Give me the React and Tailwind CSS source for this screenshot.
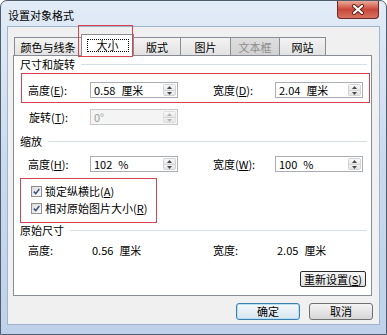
import React from 'react';

const Spin = ({ disabled }) => {
  const c = disabled ? '#b5b5b5' : '#4a4a4a';
  return (
    <div className={`flex flex-col w-[13px] my-px mr-px rounded-[2px] border ${disabled ? 'border-[#e0e0e0]' : 'border-[#cfd3d8]'}`}>
      <div className="flex-1 flex items-center justify-center bg-gradient-to-b from-[#f8f8f8] to-[#e8e8e8] border-b border-[#d5d5d5]">
        <svg width="5" height="3" viewBox="0 0 5 3"><path d="M0 3 L2.5 0 L5 3Z" fill={c} /></svg>
      </div>
      <div className="flex-1 flex items-center justify-center bg-gradient-to-b from-[#f3f3f3] to-[#e3e3e3]">
        <svg width="5" height="3" viewBox="0 0 5 3"><path d="M0 0 L2.5 3 L5 0Z" fill={c} /></svg>
      </div>
    </div>
  );
};

// number + unit, with the wider gap the dialog font gives
const Val = ({ n, u }) => (
  <span className="whitespace-nowrap">
    {n}
    <span className="ml-[6px]">{u}</span>
  </span>
);

const Field = ({ children, disabled }) => (
  <div
    className={`flex h-[16px] w-[88px] border ${
      disabled ? 'border-[#c8c8c8] bg-[#f4f4f4] text-[#9a9a9a]' : 'border-[#abadb3] bg-white text-black'
    }`}
  >
    <div className="flex-1 pl-[3px] leading-[14px] whitespace-nowrap">{children}</div>
    <Spin disabled={disabled} />
  </div>
);

const Label = ({ text, k }) => (
  <span className="whitespace-nowrap">
    {text}(<span className="underline">{k}</span>):
  </span>
);

const Heading = ({ text }) => (
  <div className="flex items-center h-[16px] pl-[6px] pr-[4px]">
    <span className="whitespace-nowrap">{text}</span>
    <div className="flex-1 ml-[6px] border-t border-[#d5dfe5]" />
  </div>
);

const Check = ({ children }) => (
  <div className="flex items-center h-[17px] pl-[17px]">
    <div className="w-[11px] h-[11px] border border-[#8e8f8f] bg-gradient-to-br from-[#dcdcdc] to-[#fbfbfb] p-px">
      <svg width="7" height="7" viewBox="0 0 7 7" className="block">
        <path d="M0.8 3.6 L2.8 5.6 L6.3 1" stroke="#3b4f86" strokeWidth="1.5" fill="none" />
      </svg>
    </div>
    <span className="ml-[3px] whitespace-nowrap">{children}</span>
  </div>
);

const Row = ({ children }) => (
  <div className="grid grid-cols-[62px_88px_35px_62px_88px] items-center pl-[14px] h-[16px]">{children}</div>
);

const tabs = [
  { t: '颜色与线条', w: 'w-[68px]' },
  { t: '大小', w: 'w-[53px]', sel: true },
  { t: '版式', w: 'w-[48px]' },
  { t: '图片', w: 'w-[51px]' },
  { t: '文本框', w: 'w-[50px]', dis: true },
  { t: '网站', w: 'w-[47px]' },
];

const App = () => {
  return (
    <div className="w-[387px] h-[335px] bg-white font-['Noto_Sans_CJK_SC','Noto_Sans',sans-serif] text-[11px] text-black">
      <div className="relative w-[387px] h-[335px] rounded-t-[7px] border border-[#4f5d6e] bg-gradient-to-b from-[#e2ecf7] via-[#c9daee] to-[#bfd2ea] px-[6px] flex flex-col">
        {/* title bar */}
        <div className="h-[25px] flex items-start justify-between">
          <span className="mt-[7px] ml-[1px] text-[11px] leading-[14px] text-black">设置对象格式</span>
          <div className="mr-[1px] w-[42px] h-[18px] rounded-b-[4px] border border-t-0 border-[#6e2a22] bg-gradient-to-b from-[#eba998] via-[#c8473a] to-[#d77260] flex items-center justify-center">
            <svg width="14" height="11" viewBox="0 0 14 11">
              <path d="M3 2 L11 9 M11 2 L3 9" stroke="#5a1d16" strokeWidth="4" strokeLinecap="round" />
              <path d="M3 2 L11 9 M11 2 L3 9" stroke="#ffffff" strokeWidth="2.2" strokeLinecap="round" />
            </svg>
          </div>
        </div>

        {/* client area */}
        <div className="w-[373px] h-[299px] border border-[#9fb4cf] bg-[#f0f0f0] flex flex-col">
          {/* tabs */}
          <div className="mt-[7px] h-[21px] pl-[6px] flex items-end">
            {tabs.map((tab, i) => (
              <div
                key={tab.t}
                className={`${tab.w} ${i > 0 ? '-ml-px' : ''} ${
                  tab.sel
                    ? 'relative z-10 h-[22px] -mb-px bg-white border border-b-0 border-[#898c95]'
                    : tab.dis
                    ? 'h-[18px] bg-gradient-to-b from-[#dedede] to-[#d2d2d2] border border-b-0 border-[#898c95] text-[#8c8c8c]'
                    : 'h-[18px] bg-gradient-to-b from-[#f3f3f3] to-[#e2e2e2] border border-b-0 border-[#898c95]'
                } flex items-start justify-center`}
              >
                {tab.sel ? (
                  <div className="mt-[4px] w-[42px] h-[13px] border border-dotted border-black flex items-center justify-center leading-[11px]">
                    {tab.t}
                  </div>
                ) : (
                  <span className="mt-[2px] leading-[14px]">{tab.t}</span>
                )}
              </div>
            ))}
          </div>

          {/* panel */}
          <div className="ml-[5px] w-[359px] h-[241px] border border-[#898c95] bg-white flex flex-col">
            <Heading text="尺寸和旋转" />
            <div className="mt-[10px]">
              <Row>
                <Label text="高度" k="E" />
                <Field><Val n="0.58" u="厘米" /></Field>
                <div />
                <Label text="宽度" k="D" />
                <Field><Val n="2.04" u="厘米" /></Field>
              </Row>
            </div>
            <div className="mt-[11px]">
              <Row>
                <span className="pl-px">
                  <Label text="旋转" k="T" />
                </span>
                <Field disabled>0°</Field>
              </Row>
            </div>
            <div className="mt-[8px]">
              <Heading text="缩放" />
            </div>
            <div className="mt-[7px]">
              <Row>
                <Label text="高度" k="H" />
                <Field><Val n="102" u="%" /></Field>
                <div />
                <Label text="宽度" k="W" />
                <Field><Val n="100" u="%" /></Field>
              </Row>
            </div>
            <div className="mt-[11px]">
              <Check>
                锁定纵横比(<span className="underline">A</span>)
              </Check>
              <Check>
                相对原始图片大小(<span className="underline">R</span>)
              </Check>
            </div>
            <div className="mt-[5px]">
              <Heading text="原始尺寸" />
            </div>
            <div className="mt-[4px]">
              <Row>
                <span>高度:</span>
                <span className="pl-[2px]"><Val n="0.56" u="厘米" /></span>
                <div />
                <span>宽度:</span>
                <span className="pl-[2px]"><Val n="2.05" u="厘米" /></span>
              </Row>
            </div>
            <div className="mt-[13px] flex justify-end pr-[5px]">
              <div className="w-[66px] h-[16px] rounded-[2px] border border-[#2b2b2b] bg-gradient-to-b from-[#f6f6f6] to-[#e1e1e1] flex items-center justify-center leading-[14px]">
                重新设置(<span className="underline">S</span>)
              </div>
            </div>
          </div>

          {/* buttons */}
          <div className="mt-[7px] flex justify-end gap-[9px] pr-[6px]">
            <div className="w-[64px] h-[17px] rounded-[3px] border border-[#3c7fb1] shadow-[inset_0_0_0_1px_#b9def5] bg-gradient-to-b from-[#f4f9fc] to-[#d7e6f0] flex items-center justify-center">
              确定
            </div>
            <div className="w-[64px] h-[17px] rounded-[3px] border border-[#707070] bg-gradient-to-b from-[#f4f4f4] to-[#d6d6d6] flex items-center justify-center">
              取消
            </div>
          </div>
        </div>

        {/* annotation rectangles */}
        <div className="absolute left-[77px] top-[24px] w-[55px] h-[32px] border border-[#d9434e] z-20" />
        <div className="absolute left-[20px] top-[72px] w-[349px] h-[30px] border border-[#d9434e]" />
        <div className="absolute left-[19px] top-[177px] w-[137px] h-[45px] border border-[#d9434e]" />
      </div>
    </div>
  );
};

export default App;
